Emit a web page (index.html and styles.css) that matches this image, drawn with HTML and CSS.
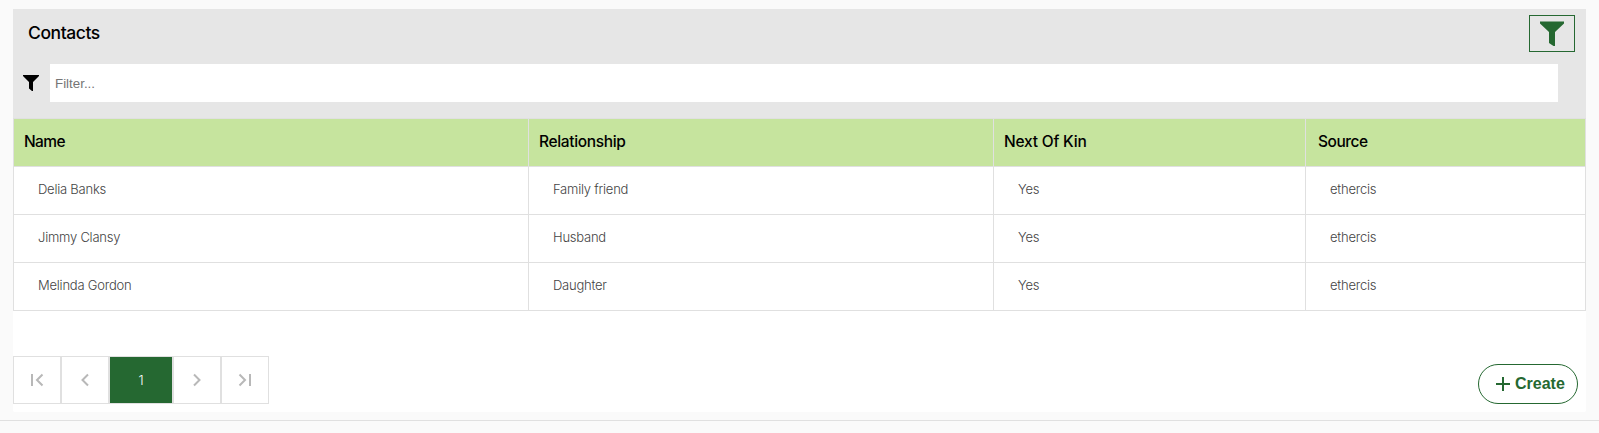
FILE: index.html
```html
<!DOCTYPE html>
<html lang="en">
<head>
<meta charset="utf-8">
<title>Contacts</title>
<link rel="stylesheet" href="styles.css">
</head>
<body>
<main class="page">
  <section class="panel">
    <header class="panel-head">
      <div class="title-row">
        <h1 class="title">Contacts</h1>
        <button class="filter-toggle" aria-label="Toggle filter">
          <svg width="24" height="25" viewBox="0 0 24 25"><path d="M0 0.500H24V2.500L15 11V25H13.500L9 22V11L0 2.500Z" fill="currentColor"/></svg>
        </button>
      </div>
      <div class="filter-row">
        <svg width="16" height="16" viewBox="0 0 16 16"><path d="M0 0H16V1L10 7V16H9L6 13.500V7L0 1Z"/></svg>
        <input class="filter-input" type="text" placeholder="Filter...">
      </div>
    </header>
    <div class="table">
      <div class="row head"><div class="name">Name</div><div>Relationship</div><div class="kin">Next Of Kin</div><div class="source">Source</div></div>
      <div class="row"><div>Delia Banks</div><div>Family friend</div><div>Yes</div><div>ethercis</div></div>
      <div class="row"><div>Jimmy Clansy</div><div>Husband</div><div>Yes</div><div>ethercis</div></div>
      <div class="row"><div>Melinda Gordon</div><div>Daughter</div><div>Yes</div><div>ethercis</div></div>
    </div>
    <footer class="panel-foot">
      <nav class="pager">
        <button aria-label="First"><svg width="14" height="14" viewBox="0 0 14 14"><path d="M2 1V13M12.500 1.500L7 7L12.500 12.500"/></svg></button>
        <button aria-label="Previous"><svg width="14" height="14" viewBox="0 0 14 14"><path d="M10 1.500L4.500 7L10 12.500"/></svg></button>
        <button class="current">1</button>
        <button aria-label="Next"><svg width="14" height="14" viewBox="0 0 14 14"><path d="M4 1.500L9.500 7L4 12.500"/></svg></button>
        <button aria-label="Last"><svg width="14" height="14" viewBox="0 0 14 14"><path d="M1.500 1.500L7 7L1.500 12.500M12 1V13"/></svg></button>
      </nav>
      <button class="create"><svg width="14" height="14" viewBox="0 0 14 14"><path d="M0 7H14M7 0V14"/></svg><span>Create</span></button>
    </footer>
  </section>
</main>
</body>
</html>
```
FILE: styles.css
```css
* { box-sizing: border-box; }
body { margin: 0; background: #fafafa; color: #000; font-family: Inter, "Liberation Sans", sans-serif; }
button { margin: 0; padding: 0; background: none; font: inherit; }
svg { display: block; flex: none; }
.page { height: 421px; padding: 9px 13px 0; border-bottom: 1px solid #e0e0e0; }
.panel { height: 403px; background: #fff; border-radius: 2px; }
.panel-head { height: 109px; background: #e6e6e6; }
.title-row { display: flex; justify-content: space-between; padding: 6px 11px 0 15px; height: 55px; }
.title { margin: 6px 0 0; font-size: 17.500px; font-weight: 500; line-height: 24px; letter-spacing: -0.430px; }
.filter-toggle { display: flex; justify-content: center; width: 46px; height: 37px; padding-top: 5px; border: 1px solid #256831; color: #256831; }
.filter-row { display: flex; align-items: center; gap: 11px; padding: 0 28px 0 10px; }
.filter-input { flex: 1; height: 38px; padding: 1px 5px 0; border: 0; background: #fff; font: 13.330px "Liberation Sans", sans-serif; }
.filter-input::placeholder { color: #757575; }
.table { border-left: 1px solid #e0e0e0; }
.row { display: grid; grid-template-columns: 515px 465px 312px 280px; height: 48px; color: #444; font-size: 13px; font-weight: 300; line-height: 45px; letter-spacing: -0.230px; }
.row > div { padding-left: 24px; border-right: 1px solid #e0e0e0; border-bottom: 1px solid #e0e0e0; }
.row.head { height: 49px; color: #000; font-size: 15.500px; font-weight: 500; line-height: 45px; letter-spacing: -0.350px; }
.row.head > div { padding-left: 10px; background: #c6e49e; border-top: 1px solid #e0e0e0; }
.row.head .name { letter-spacing: -0.600px; }
.row.head .kin { letter-spacing: -0.200px; }
.row.head .source { padding-left: 12px; letter-spacing: -0.450px; }
.panel-foot { display: flex; justify-content: space-between; padding: 45px 8px 0 0; }
.pager { display: flex; }
.pager button { display: flex; align-items: center; justify-content: center; width: 48px; height: 48px; border: 1px solid #e0e0e0; color: #fff; font-size: 13px; font-weight: 300; }
.pager .current { width: 64px; background: #256831; }
.pager path { fill: none; stroke: #b8b8b8; stroke-width: 2; }
.create { display: flex; align-items: center; gap: 5px; width: 100px; height: 40px; margin-top: 8px; padding-left: 17px; border: 1px solid #256831; border-radius: 20px; color: #256831; font: bold 16px "Liberation Sans", sans-serif; }
.create path { stroke: currentColor; stroke-width: 2; }
```
